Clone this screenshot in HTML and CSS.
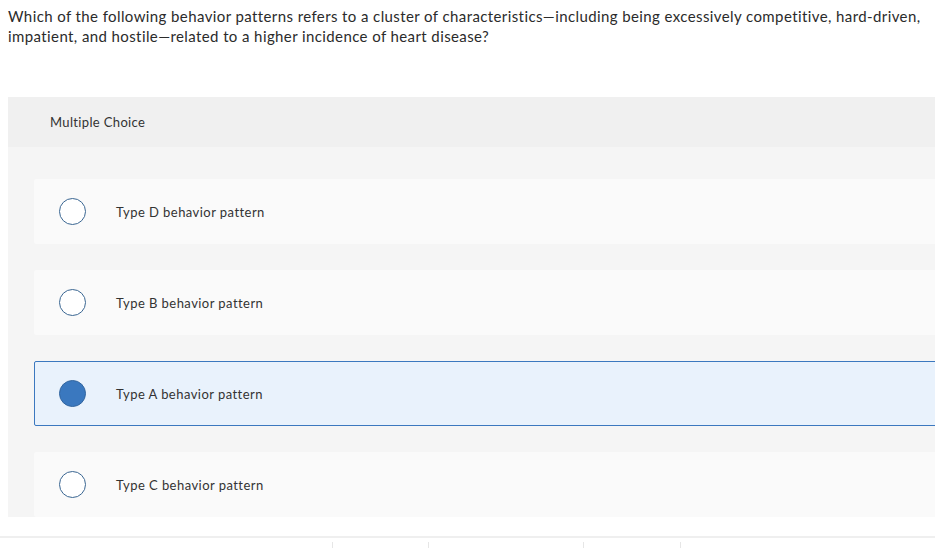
FILE: index.html
```html
<html>
<head>
<meta name="viewport" content="width=device-width, initial-scale=1">
<title>Multiple Choice</title>
<link rel="stylesheet" href="styles.css">
</head>
<body>
        <div class="prompt">
            Which of the following behavior patterns refers to a cluster of characteristics—including being excessively competitive, <span class="nowrap">hard-driven,</span> impatient, and hostile—related to a higher incidence of heart disease?
        </div>
        <div class="question">
            <div class="question-type">Multiple Choice</div>
            <div class="choices">
                <label class="choice">
                    <span class="radio"></span>
                    <span class="choice-text">Type D behavior pattern</span>
                </label>
                <label class="choice">
                    <span class="radio"></span>
                    <span class="choice-text">Type B behavior pattern</span>
                </label>
                <label class="choice selected">
                    <span class="radio"></span>
                    <span class="choice-text">Type A behavior pattern</span>
                </label>
                <label class="choice">
                    <span class="radio"></span>
                    <span class="choice-text">Type C behavior pattern</span>
                </label>
            </div>
        </div>
        <div class="footer">
            <span class="tick"></span>
            <span class="tick"></span>
            <span class="tick"></span>
            <span class="tick"></span>
        </div>
</body>
</html>
```

FILE: styles.css
```css
body{
    margin: 0;
    padding: 0;
    background: white;
    color: #2b2b2b;
    font-family: "Lato", "Open Sans", "Liberation Sans", sans-serif;
    overflow: hidden;
}
.prompt {
    padding: 6px 4px 0 8px;
    font-size: 15px;
    line-height: 20px;
    letter-spacing: 0.4px;
    height: 97px;
    box-sizing: border-box;
}
.nowrap {
    white-space: nowrap;
}
.question {
    margin-left: 8px;
    margin-right: -24px;
    background: #f5f5f5;
}
.question-type {
    height: 50px;
    display: flex;
    align-items: center;
    padding-left: 42px;
    background: #f0f0f0;
    font-size: 13px;
    letter-spacing: 0.35px;
    color: #333;
}
.choices {
    display: flex;
    flex-direction: column;
    gap: 26px;
    padding: 32px 0 0 26px;
}
.choice {
    display: flex;
    align-items: center;
    height: 65px;
    box-sizing: border-box;
    background: #fafafa;
    border-radius: 2px;
    padding-left: 25px;
}
.choice.selected {
    background: #e9f2fc;
    border: 1px solid #3b78bf;
    padding-left: 24px;
}
.radio {
    width: 25px;
    height: 25px;
    border: 1.5px solid #3a6692;
    border-radius: 50%;
    background: white;
}
.selected .radio {
    background: #3a78bf;
    border-color: #33669f;
}
.choice-text {
    margin-left: 30px;
    font-size: 13px;
    letter-spacing: 0.45px;
    color: #333;
}
.footer {
    margin-top: 19px;
    height: 20px;
    border-top: 2px solid #efefef;
    display: flex;
    align-items: flex-start;
}
.tick {
    width: 1px;
    height: 6px;
    background: #e6e6e6;
    margin-top: 4px;
}
.tick:nth-child(1) { margin-left: 332px; }
.tick:nth-child(2) { margin-left: 95px; }
.tick:nth-child(3) { margin-left: 154px; }
.tick:nth-child(4) { margin-left: 96px; }
```
